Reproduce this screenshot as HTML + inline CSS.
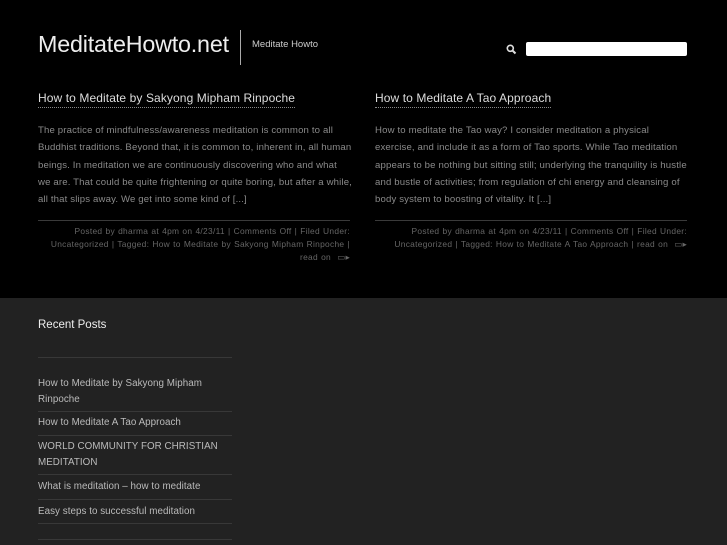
<!DOCTYPE html>
<html><head><style>
*{margin:0;padding:0;box-sizing:border-box}
body{width:727px;height:545px;overflow:hidden;background:#000;font-family:"Liberation Sans",sans-serif;position:relative}
.a{position:absolute}
h1{position:absolute;left:38px;top:31px;font-size:23.3px;font-weight:normal;color:#eee;letter-spacing:-0.2px}
.t{position:absolute;font-size:12px;color:#ddd;border-bottom:1px dotted #888;line-height:15px;padding-bottom:1px;letter-spacing:0.1px}
.p{position:absolute;font-size:9.6px;line-height:17.3px;color:#8a8a8a;white-space:nowrap;letter-spacing:0.15px}
.hr{position:absolute;height:1px;background:#3a3a3a}
.m{position:absolute;font-size:8.4px;line-height:12.8px;color:#666;text-align:right;width:312px;letter-spacing:0.3px;word-spacing:0.5px}
.foot{position:absolute;left:0;top:298px;width:727px;height:247px;background:#222}
.li{position:absolute;left:38px;width:194px;font-size:9.8px;line-height:15.5px;color:#bbb;letter-spacing:0.05px}
.sep{position:absolute;left:38px;width:194px;height:1px;background:#383838}
</style></head><body>
<h1>MeditateHowto.net</h1>
<div class="a" style="left:240px;top:30px;width:1px;height:35px;background:#aaa"></div>
<div class="a" style="left:252px;top:39px;font-size:9.5px;color:#ccc">Meditate Howto</div>
<svg class="a" style="left:506px;top:44px" width="11" height="11" viewBox="0 0 11 11"><circle cx="4.3" cy="4.3" r="3" stroke="#ddd" stroke-width="1.6" fill="none"/><path d="M6.5 6.5L9.5 9.5" stroke="#ddd" stroke-width="2"/></svg>
<div class="a" style="left:526px;top:42px;width:161px;height:14px;background:#fff;border-radius:2px"></div>

<div class="t" style="left:38px;top:91px">How to Meditate by Sakyong Mipham Rinpoche</div>
<div class="p" style="left:38px;top:122px">The practice of mindfulness/awareness meditation is common to all<br>Buddhist traditions. Beyond that, it is common to, inherent in, all human<br>beings. In meditation we are continuously discovering who and what<br>we are. That could be quite frightening or quite boring, but after a while,<br>all that slips away. We get into some kind of [...]</div>
<div class="hr" style="left:38px;top:220px;width:312px"></div>
<div class="m" style="left:38px;top:225px">Posted by dharma at 4pm on 4/23/11 | Comments Off | Filed Under: Uncategorized | Tagged: How to Meditate by Sakyong Mipham Rinpoche | read on &nbsp;▭▸</div>

<div class="t" style="left:375px;top:91px">How to Meditate A Tao Approach</div>
<div class="p" style="left:375px;top:122px">How to meditate the Tao way? I consider meditation a physical<br>exercise, and include it as a form of Tao sports. While Tao meditation<br>appears to be nothing but sitting still; underlying the tranquility is hustle<br>and bustle of activities; from regulation of chi energy and cleansing of<br>body system to boosting of vitality. It [...]</div>
<div class="hr" style="left:375px;top:220px;width:312px"></div>
<div class="m" style="left:375px;top:225px">Posted by dharma at 4pm on 4/23/11 | Comments Off | Filed Under: Uncategorized | Tagged: How to Meditate A Tao Approach | read on &nbsp;▭▸</div>

<div class="foot"></div>
<div class="a" style="left:38px;top:319px;font-size:11.5px;color:#eee">Recent Posts</div>
<div class="sep" style="top:357px"></div>
<div class="li" style="top:376px">How to Meditate by Sakyong Mipham Rinpoche</div>
<div class="sep" style="top:411px"></div>
<div class="li" style="top:415px">How to Meditate A Tao Approach</div>
<div class="sep" style="top:435px"></div>
<div class="li" style="top:439px">WORLD COMMUNITY FOR CHRISTIAN MEDITATION</div>
<div class="sep" style="top:474px"></div>
<div class="li" style="top:479px">What is meditation – how to meditate</div>
<div class="sep" style="top:499px"></div>
<div class="li" style="top:504px">Easy steps to successful meditation</div>
<div class="sep" style="top:523px"></div>
<div class="sep" style="top:539px"></div>
</body></html>
